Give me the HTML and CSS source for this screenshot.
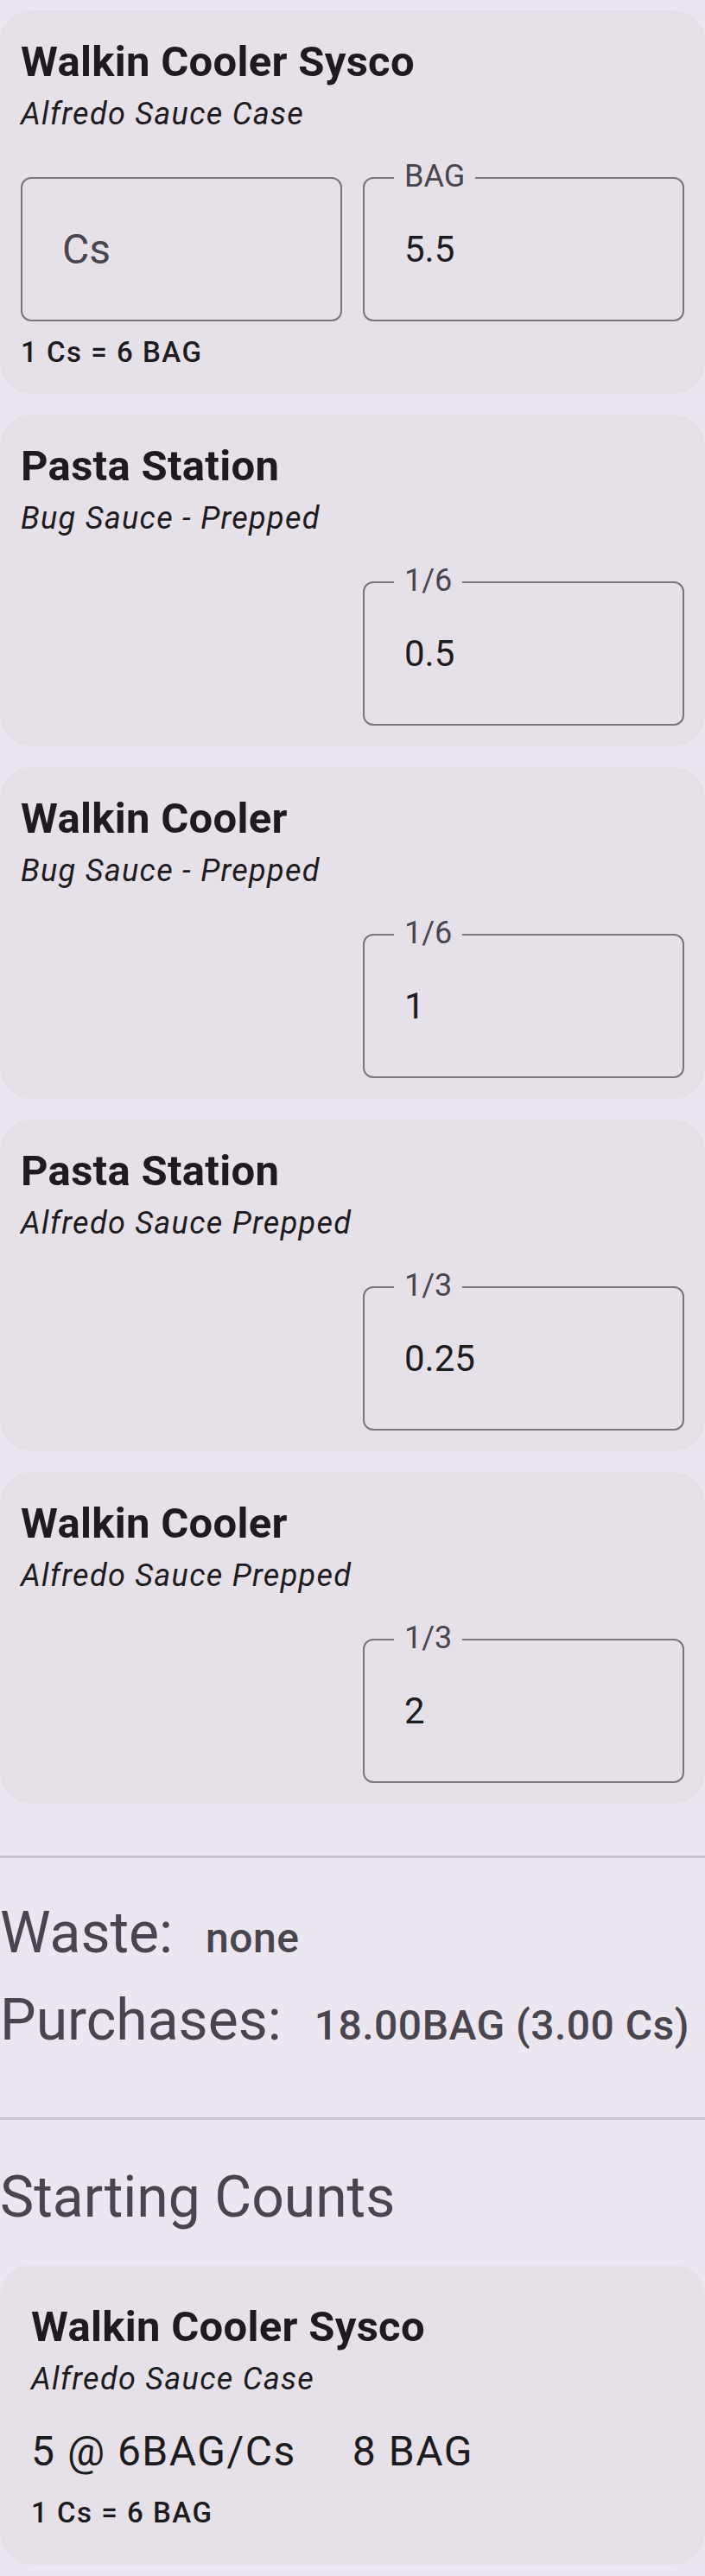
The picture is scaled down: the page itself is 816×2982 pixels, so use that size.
FILE: index.html
```html
<!DOCTYPE html>
<html lang="en">

<head>
    <title>Count review</title>
    <meta charset="UTF-8">
    <link rel="stylesheet" href="styles.css">
</head>

<body>

    <div class="list">
        <div class="card">
            <h2 class="card-title">Walkin Cooler Sysco</h2>
            <p class="card-sub">Alfredo Sauce Case</p>
            <div class="fields">
                <div class="field"><span class="field-hint">Cs</span></div>
                <div class="field">
                    <span class="field-label">BAG</span>
                    <span class="field-value">5.5</span>
                </div>
            </div>
            <p class="conv">1 Cs = 6 BAG</p>
        </div>
        <div class="card">
            <h2 class="card-title">Pasta Station</h2>
            <p class="card-sub">Bug Sauce - Prepped</p>
            <div class="fields">
                <div class="field field-right">
                    <span class="field-label">1/6</span>
                    <span class="field-value">0.5</span>
                </div>
            </div>
        </div>
        <div class="card">
            <h2 class="card-title">Walkin Cooler</h2>
            <p class="card-sub">Bug Sauce - Prepped</p>
            <div class="fields">
                <div class="field field-right">
                    <span class="field-label">1/6</span>
                    <span class="field-value">1</span>
                </div>
            </div>
        </div>
        <div class="card">
            <h2 class="card-title">Pasta Station</h2>
            <p class="card-sub">Alfredo Sauce Prepped</p>
            <div class="fields">
                <div class="field field-right">
                    <span class="field-label">1/3</span>
                    <span class="field-value">0.25</span>
                </div>
            </div>
        </div>
        <div class="card">
            <h2 class="card-title">Walkin Cooler</h2>
            <p class="card-sub">Alfredo Sauce Prepped</p>
            <div class="fields">
                <div class="field field-right">
                    <span class="field-label">1/3</span>
                    <span class="field-value">2</span>
                </div>
            </div>
        </div>
    </div>

    <hr class="divider divider-top">
    <div class="totals">
        <div class="total-row">
            <span class="total-name">Waste:</span>
            <span class="total-val">none</span>
        </div>
        <div class="total-row">
            <span class="total-name">Purchases:</span>
            <span class="total-val">18.00BAG (3.00 Cs)</span>
        </div>
    </div>
    <hr class="divider divider-bottom">

    <h1 class="section-title">Starting Counts</h1>
    <div class="card card-start">
        <h2 class="card-title">Walkin Cooler Sysco</h2>
        <p class="card-sub">Alfredo Sauce Case</p>
        <div class="count-row">
            <span>5 @ 6BAG/Cs</span>
            <span>8 BAG</span>
        </div>
        <p class="conv conv-start">1 Cs = 6 BAG</p>
    </div>

</body>

</html>
```

FILE: styles.css
```css
body {
    margin: 0;
    background: #ece6f0;
    color: #1d1b20;
    font-family: Roboto, "Noto Sans", sans-serif;
}

.list {
    display: flex;
    flex-direction: column;
    gap: 24px;
    padding-top: 12px;
}

.card {
    background: #e6e1e8;
    border-radius: 36px;
    padding: 24px;
}

.card-title {
    margin: 0;
    font-size: 49px;
    font-weight: 700;
    line-height: 72px;
    letter-spacing: 0.3px;
}

.card-sub {
    margin: 0;
    font-size: 36px;
    font-style: italic;
    line-height: 48px;
    letter-spacing: 1.3px;
}

/* two columns, a single field sits on the right */
.fields {
    display: grid;
    grid-template-columns: 1fr 1fr;
    gap: 24px;
    margin-top: 49px;
}

.field {
    position: relative;
    box-sizing: border-box;
    height: 167px;
    display: flex;
    align-items: center;
    padding-left: 46px;
    border: 2px solid #79747e;
    border-radius: 12px;
}

.field-right {
    grid-column: 2;
}

.field-label {
    position: absolute;
    top: -21px;
    left: 34px;
    padding: 0 12px;
    background: #e6e1e8;
    color: #49454f;
    font-size: 36px;
    line-height: 36px;
}

.field-hint {
    color: #49454f;
    font-size: 48px;
}

.field-value {
    font-size: 42px;
}

.conv {
    margin: 12px 0 0;
    font-size: 33px;
    font-weight: 500;
    line-height: 48px;
    letter-spacing: 1.5px;
}

.divider {
    height: 3px;
    margin: 0;
    border: 0;
    background: #cac4d0;
}

.divider-top {
    margin-top: 60px;
}

.divider-bottom {
    margin-top: 70px;
}

.totals {
    display: flex;
    flex-direction: column;
    gap: 17px;
    padding-top: 45px;
    color: #49454f;
}

.total-row {
    display: flex;
    align-items: baseline;
    gap: 38px;
}

.total-name {
    font-size: 66px;
    line-height: 84px;
}

.total-val {
    font-size: 48px;
    font-weight: 500;
    line-height: 72px;
    letter-spacing: 0.5px;
}

.section-title {
    margin: 48px 0 0;
    color: #49454f;
    font-size: 66px;
    font-weight: 400;
    line-height: 84px;
}

.card-start {
    margin-top: 36px;
    padding: 36px;
}

.count-row {
    display: flex;
    gap: 65px;
    margin-top: 24px;
    font-size: 48px;
    line-height: 72px;
    letter-spacing: 1.5px;
}

.conv-start {
    margin-top: 11px;
}
```
